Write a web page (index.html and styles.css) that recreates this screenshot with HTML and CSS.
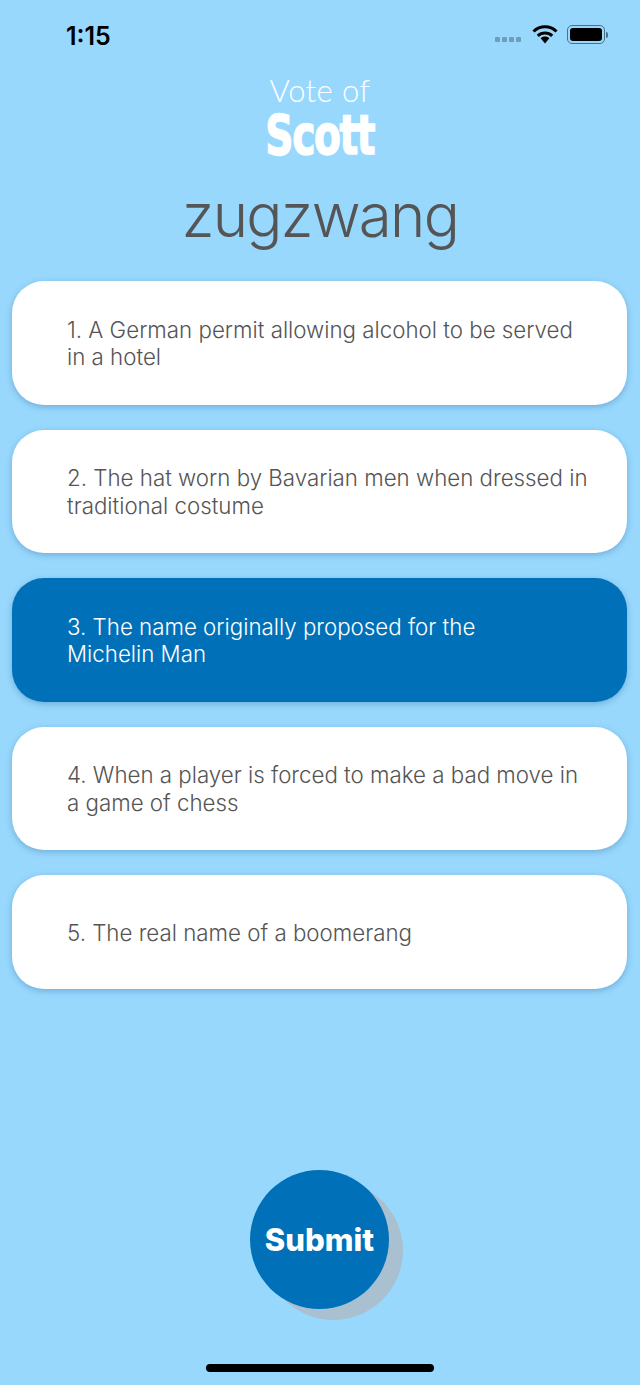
FILE: index.html
```html
<!DOCTYPE html>
<html lang="en">
<head>
    <meta charset="UTF-8">
    <meta name="viewport" content="width=device-width, initial-scale=1.0">
    <title>Vote of Scott</title>
    <link rel="stylesheet" href="styles.css">
</head>
<body>
    <div class="screen">
        <div class="status-bar">
            <span class="status-time">1:15</span>
            <div class="status-icons">
                <div class="signal-dots"><i></i><i></i><i></i><i></i></div>
                <svg class="wifi-icon" width="26" height="19" viewBox="0 0 26 19">
                    <path d="M1.5 6.5a16.5 16.5 0 0 1 23 0" fill="none" stroke="#000" stroke-width="3"/>
                    <path d="M5.8 10.8a10.4 10.4 0 0 1 14.4 0" fill="none" stroke="#000" stroke-width="3"/>
                    <path d="M13 11.5c1.9 0 3.4.7 4.4 1.7L13 18.5l-4.4-5.3c1-1 2.5-1.7 4.4-1.7z" fill="#000"/>
                </svg>
                <div class="battery"><div class="battery-fill"></div></div>
                <div class="battery-cap"></div>
            </div>
        </div>

        <div class="logo">
            <div class="logo-top">Vote of</div>
            <div class="logo-name">Scott</div>
        </div>

        <h1 class="word">zugzwang</h1>

        <div class="options">
            <div class="option"><p>1. A German permit allowing alcohol to be served in a hotel</p></div>
            <div class="option"><p>2. The hat worn by Bavarian men when dressed in traditional costume</p></div>
            <div class="option selected"><p>3. The name originally proposed for the<br>Michelin Man</p></div>
            <div class="option"><p>4. When a player is forced to make a bad move in a game of chess</p></div>
            <div class="option single"><p>5. The real name of a boomerang</p></div>
        </div>

        <button class="submit-button">Submit</button>
        <div class="home-bar"></div>
    </div>
</body>
</html>
```

FILE: styles.css
```css
/* Global Styles */
body {
    margin: 0;
    padding: 0;
    background: #99d8fd;
    font-family: 'Inter', sans-serif;
    overflow: hidden;
}

.screen {
    height: 1385px;
    display: flex;
    flex-direction: column;
    align-items: center;
}

/* Status bar */
.status-bar {
    align-self: stretch;
    height: 70px;
    box-sizing: border-box;
    padding: 22px 32px 0 66px;
    display: flex;
    justify-content: space-between;
    align-items: flex-start;
}

.status-time {
    font-size: 25px;
    line-height: 28px;
    font-weight: 600;
    color: #000;
}

.status-icons {
    display: flex;
    align-items: center;
    margin-top: 3px;
}

.signal-dots {
    display: flex;
    gap: 2px;
    margin-top: 10px;
    margin-right: 11px;
}

.signal-dots i {
    width: 5px;
    height: 5px;
    border-radius: 1px;
    background: #6f9dbd;
}

.wifi-icon {
    margin-right: 9px;
}

.battery {
    width: 38px;
    height: 19px;
    box-sizing: border-box;
    padding: 2px;
    border: 1px solid #4a7188;
    border-radius: 5px;
}

.battery-fill {
    height: 100%;
    background: #000;
    border-radius: 3px;
}

.battery-cap {
    width: 2px;
    height: 6px;
    margin-left: 1px;
    background: #4a7188;
    border-radius: 0 2px 2px 0;
}

/* Logo */
.logo {
    text-align: center;
    color: #fff;
    margin-top: -1px;
}

.logo-top {
    font-family: 'Lato', sans-serif;
    font-weight: 300;
    font-size: 31px;
    line-height: 42px;
    letter-spacing: 0.4px;
}

.logo-name {
    font-family: 'DejaVu Sans', sans-serif;
    font-weight: 700;
    font-size: 56px;
    line-height: 47px;
    letter-spacing: -2px;
    -webkit-text-stroke: 1.5px #fff;
    transform: scaleX(0.7);
}

.word {
    margin: 21px 0 0;
    font-size: 60px;
    line-height: 72px;
    font-weight: 300;
    letter-spacing: -1.7px;
    color: #555;
}

/* Answer cards */
.options {
    align-self: stretch;
    margin: 30px 13px 0 12px;
    display: flex;
    flex-direction: column;
    gap: 25px;
}

.option {
    min-height: 123.5px;
    box-sizing: border-box;
    padding: 1px 38px 0 55px;
    display: flex;
    align-items: center;
    background: #fff;
    border-radius: 32px;
    box-shadow: 0 2px 6px rgba(60, 120, 170, 0.45);
    color: #555;
}

.option p {
    margin: 0;
    font-size: 22.3px;
    line-height: 27.5px;
    font-weight: 300;
}

.option.single {
    min-height: 114px;
}

.option.selected {
    background: #0071b9;
    color: #fff;
}

/* Submit */
.submit-button {
    width: 139px;
    height: 139px;
    margin-top: 181px;
    margin-right: 1px;
    padding: 0;
    border: none;
    border-radius: 50%;
    background: #0071b9;
    box-shadow: 14px 11px 0 #a9c0d0;
    color: #fff;
    font-family: 'Inter', sans-serif;
    font-size: 31px;
    font-weight: 800;
}

.home-bar {
    width: 228px;
    height: 8px;
    margin-top: 55px;
    background: #000;
    border-radius: 4px;
}
```
